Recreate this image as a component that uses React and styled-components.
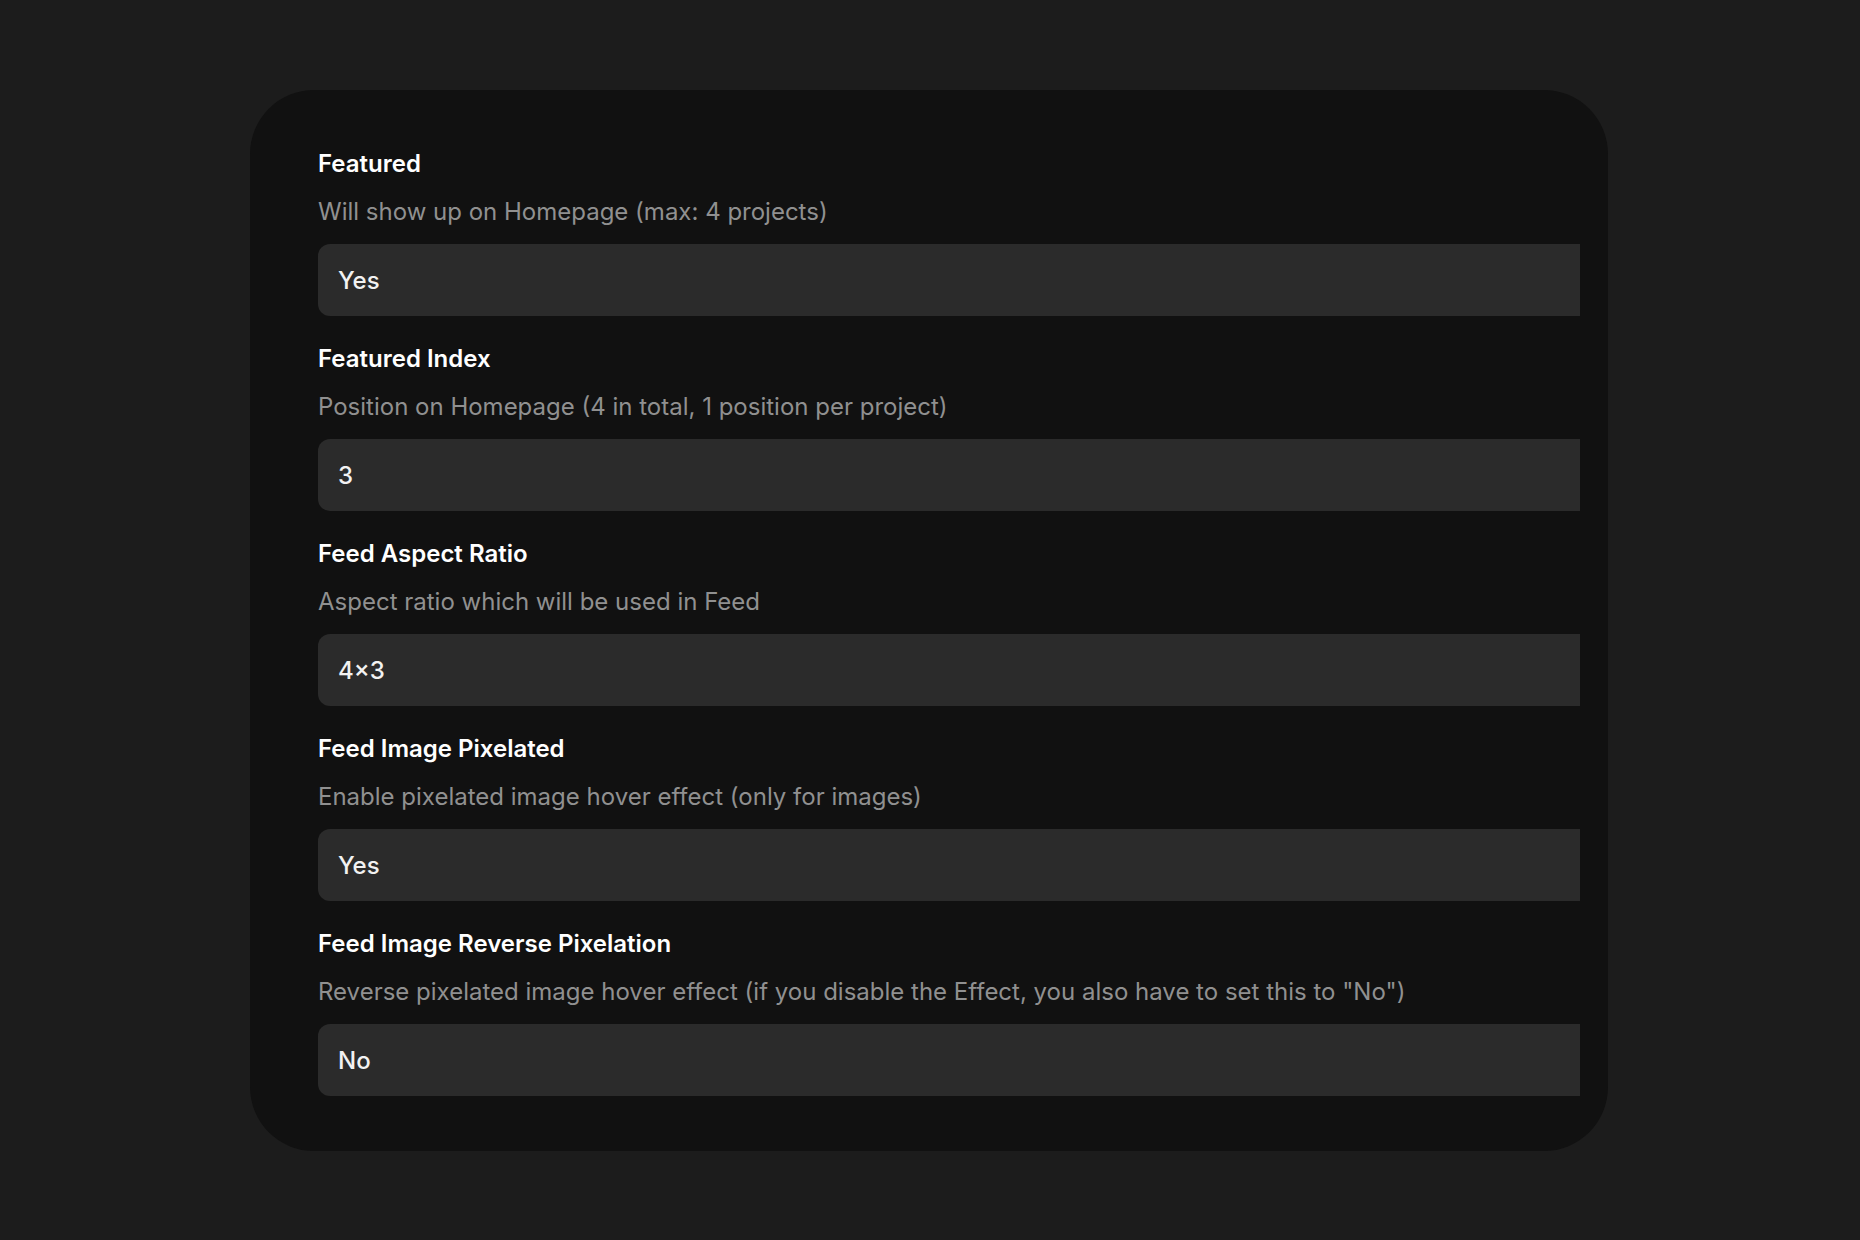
import React from 'react';
import styled, { createGlobalStyle } from 'styled-components';

const GlobalStyle = createGlobalStyle`
  html, body {
    margin: 0;
    padding: 0;
    background: #1c1c1c;
  }
  body {
    font-family: Inter, 'Noto Sans', sans-serif;
    -webkit-font-smoothing: antialiased;
  }
`;

const Page = styled.div`
  min-height: 1240px;
  padding: 90px 0 88px 250px;
  box-sizing: border-box;
`;

const Card = styled.div`
  width: 1358px;
  box-sizing: border-box;
  background: #111111;
  border-radius: 64px;
  padding: 60px 28px 55px 68px;
  display: flex;
  flex-direction: column;
  gap: 29px;
`;

const Field = styled.div`
  display: flex;
  flex-direction: column;
`;

const Label = styled.div`
  font-size: 24px;
  line-height: 28px;
  font-weight: 600;
  color: #ffffff;
`;

const Hint = styled.div`
  margin-top: 20px;
  font-size: 24px;
  line-height: 28px;
  font-weight: 400;
  color: #909090;
`;

const Value = styled.div`
  margin-top: 18px;
  height: 72px;
  display: flex;
  align-items: center;
  padding-left: 20px;
  background: #2b2b2b;
  border-radius: 12px 0 0 12px;
  font-size: 24px;
  font-weight: 500;
  color: #f2f2f2;
`;

const fields = [
  { label: 'Featured', hint: 'Will show up on Homepage (max: 4 projects)', value: 'Yes' },
  { label: 'Featured Index', hint: 'Position on Homepage (4 in total, 1 position per project)', value: '3' },
  { label: 'Feed Aspect Ratio', hint: 'Aspect ratio which will be used in Feed', value: '4×3' },
  { label: 'Feed Image Pixelated', hint: 'Enable pixelated image hover effect (only for images)', value: 'Yes' },
  {
    label: 'Feed Image Reverse Pixelation',
    hint: 'Reverse pixelated image hover effect (if you disable the Effect, you also have to set this to "No")',
    value: 'No',
  },
];

function App() {
  return (
    <>
      <GlobalStyle />
      <Page>
        <Card>
          {fields.map((f) => (
            <Field key={f.label}>
              <Label>{f.label}</Label>
              <Hint>{f.hint}</Hint>
              <Value>{f.value}</Value>
            </Field>
          ))}
        </Card>
      </Page>
    </>
  );
}

export default App;
